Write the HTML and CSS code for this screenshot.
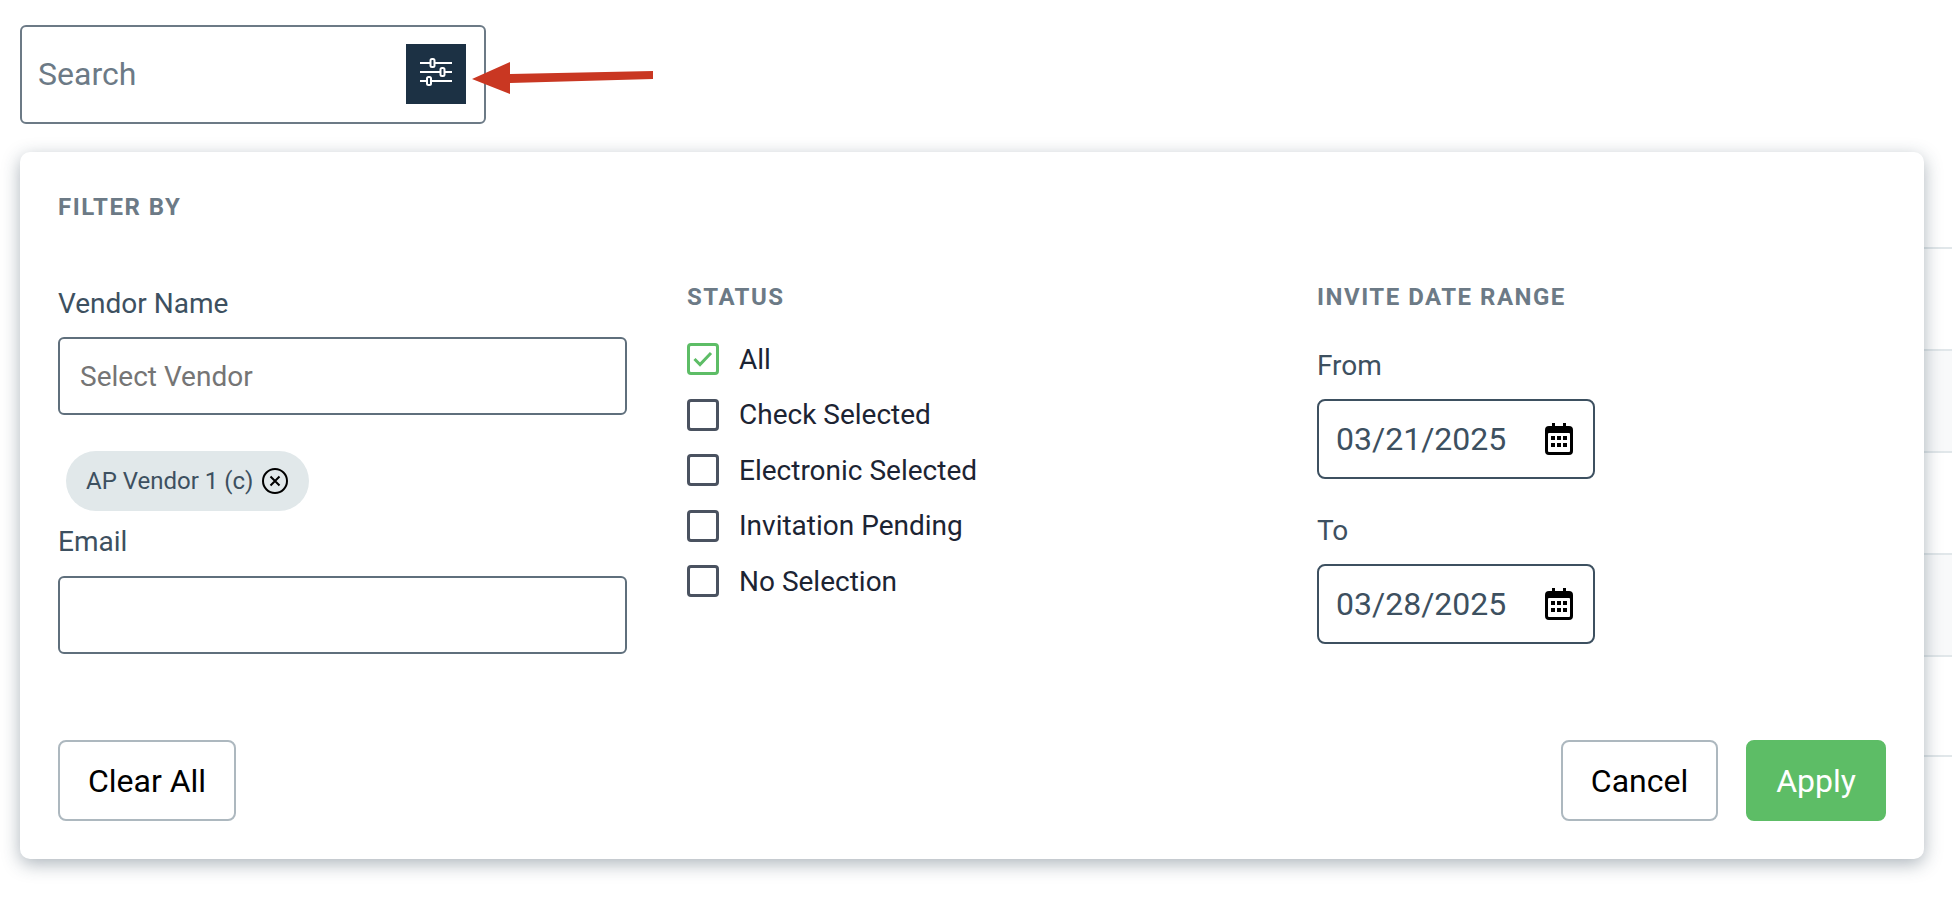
FILE: index.html
```html
<!DOCTYPE html>
<html lang="en">
<head>
<meta charset="utf-8">
<title>Vendor filter</title>
<link rel="stylesheet" href="styles.css">
</head>
<body>
<div class="page">
  <div class="search">
    <input class="search-input" type="text" placeholder="Search">
    <button class="filter-toggle" type="button" aria-label="Filter">
      <svg width="32" height="24" viewBox="0 0 32 24">
        <path d="M0 3h32M0 12h32M0 21h32" stroke="#fff" stroke-width="2" fill="none"/>
        <rect x="10.500" y="-1" width="4" height="8" rx="1.500" fill="#1c3144" stroke="#fff" stroke-width="2"/>
        <rect x="20.500" y="8" width="4" height="8" rx="1.500" fill="#1c3144" stroke="#fff" stroke-width="2"/>
        <rect x="7" y="17" width="4" height="8" rx="1.500" fill="#1c3144" stroke="#fff" stroke-width="2"/>
      </svg>
    </button>
  </div>

  <svg class="arrow" width="184" height="36" viewBox="0 0 184 36" aria-hidden="true">
    <path d="M0 19 38 2 38 14 181 11 181 19 38 23 38 34Z" fill="#c93722"/>
  </svg>

  <div class="table">
    <div class="row"></div>
    <div class="row row-alt"></div>
    <div class="row"></div>
    <div class="row row-alt"></div>
    <div class="row row-last"></div>
  </div>

  <section class="panel">
    <h2 class="title">FILTER BY</h2>
    <div class="columns">
      <div class="col">
        <label class="label label-vendor">Vendor Name</label>
        <input class="field field-vendor" type="text" placeholder="Select Vendor">
        <div class="chip">
          <span>AP Vendor 1 (c)</span>
          <svg width="26" height="26" viewBox="0 0 26 26">
            <circle cx="13" cy="13" r="12" fill="none" stroke="#000" stroke-width="2"/>
            <path d="M8.500 8.500l9 9M17.500 8.500l-9 9" stroke="#000" stroke-width="2" fill="none"/>
          </svg>
        </div>
        <label class="label label-email">Email</label>
        <input class="field field-email" type="text">
      </div>

      <div class="col">
        <h3 class="heading">STATUS</h3>
        <ul class="checks">
          <li class="check">
            <span class="box box-on">
              <svg width="20" height="16" viewBox="0 0 20 16"><path d="M1.500 8l5.500 5.500L18 2" fill="none" stroke="#5dbd66" stroke-width="3"/></svg>
            </span>All
          </li>
          <li class="check"><span class="box"></span>Check Selected</li>
          <li class="check"><span class="box"></span>Electronic Selected</li>
          <li class="check"><span class="box"></span>Invitation Pending</li>
          <li class="check"><span class="box"></span>No Selection</li>
        </ul>
      </div>

      <div class="col">
        <h3 class="heading">INVITE DATE RANGE</h3>
        <label class="label label-from">From</label>
        <div class="date">
          <span>03/21/2025</span>
          <svg width="28" height="32" viewBox="0 0 28 32">
            <path d="M7 0h3v3h8V0h3v3h3a4 4 0 0 1 4 4v21a4 4 0 0 1-4 4H4a4 4 0 0 1-4-4V7a4 4 0 0 1 4-4h3z" fill="#000"/>
            <rect x="3" y="10" width="22" height="19" rx="1" fill="#fff"/>
            <path d="M6 13h4v4H6zM12 13h4v4h-4zM18 13h4v4h-4zM6 20h4v4H6zM12 20h4v4h-4zM18 20h4v4h-4z" fill="#000"/>
          </svg>
        </div>
        <label class="label label-to">To</label>
        <div class="date">
          <span>03/28/2025</span>
          <svg width="28" height="32" viewBox="0 0 28 32">
            <path d="M7 0h3v3h8V0h3v3h3a4 4 0 0 1 4 4v21a4 4 0 0 1-4 4H4a4 4 0 0 1-4-4V7a4 4 0 0 1 4-4h3z" fill="#000"/>
            <rect x="3" y="10" width="22" height="19" rx="1" fill="#fff"/>
            <path d="M6 13h4v4H6zM12 13h4v4h-4zM18 13h4v4h-4zM6 20h4v4H6zM12 20h4v4h-4zM18 20h4v4h-4z" fill="#000"/>
          </svg>
        </div>
      </div>
    </div>

    <div class="footer">
      <button class="btn btn-clear" type="button">Clear All</button>
      <div class="footer-right">
        <button class="btn btn-cancel" type="button">Cancel</button>
        <button class="btn btn-apply" type="button">Apply</button>
      </div>
    </div>
  </section>
</div>
</body>
</html>
```

FILE: styles.css
```css
* { box-sizing: border-box; }
html, body { margin: 0; padding: 0; background: #fff; }
body { font-family: Roboto, "Liberation Sans", sans-serif; overflow: hidden; }

.page {
  position: relative;
  width: 1952px;
  height: 902px;
  padding: 25px 0 0 20px;
}

/* search */
.search {
  width: 466px;
  height: 99px;
  border: 2px solid #6c7a86;
  border-radius: 6px;
  display: flex;
  align-items: center;
  padding: 0 18px 2px 16px;
}
.search-input {
  flex: 1;
  min-width: 0;
  border: 0;
  outline: 0;
  padding: 0;
  background: none;
  font: 32px Roboto, sans-serif;
  color: #6c7a86;
}
.search-input::placeholder { color: #6c7a86; opacity: 1; }
.filter-toggle {
  width: 60px;
  height: 60px;
  padding: 0;
  border: 0;
  background: #1c3144;
  display: flex;
  align-items: center;
  justify-content: center;
}
.filter-toggle svg { overflow: visible; margin-bottom: 4px; }

.arrow { position: absolute; left: 472px; top: 60px; }

/* background table */
.table { margin-top: 123px; }
.row {
  height: 102px;
  border-top: 2px solid #e1e7ea;
}
.row-alt { background: #f8f9fa; }
.row-last { border-bottom: 2px solid #e1e7ea; }

/* panel */
.panel {
  position: absolute;
  left: 20px;
  top: 152px;
  width: 1904px;
  height: 707px;
  background: #fff;
  border-radius: 10px;
  box-shadow: 0 5px 18px rgba(40, 60, 80, .38);
  padding: 41px 38px 38px;
  display: flex;
  flex-direction: column;
}
.title {
  margin: 0;
  font-size: 24px;
  line-height: 28px;
  font-weight: 700;
  letter-spacing: 1.500px;
  color: #6c7a86;
}
.columns {
  display: grid;
  grid-template-columns: 629px 630px 1fr;
  margin-top: 60px;
}
.heading {
  margin: 0;
  font-size: 24px;
  line-height: 32px;
  font-weight: 700;
  letter-spacing: 1.500px;
  color: #6c7a86;
}
.label {
  display: block;
  font-size: 28px;
  line-height: 32px;
  color: #3d5060;
}
.label-vendor { margin-top: 7px; }
.label-email { margin-top: 15px; }
.label-from { margin-top: 37px; }
.label-to { margin-top: 36px; }

.field {
  display: block;
  width: 569px;
  height: 78px;
  border: 2px solid #5f6f7c;
  border-radius: 6px;
  padding: 0 20px;
  font: 28px Roboto, sans-serif;
  color: #3d5060;
  outline: 0;
  background: #fff;
}
.field::placeholder { color: #757575; opacity: 1; }
.field-vendor { margin-top: 17px; }
.field-email { margin-top: 18px; }

.chip {
  display: inline-flex;
  align-items: center;
  gap: 9px;
  height: 60px;
  margin: 36px 0 0 8px;
  padding: 0 21px 0 20px;
  border-radius: 30px;
  background: #e1e8ea;
  font-size: 24px;
  color: #3d5060;
  vertical-align: top;
}

.checks { list-style: none; margin: 30px 0 0; padding: 0; display: flex; flex-direction: column; gap: 23.500px; }
.check {
  display: flex;
  align-items: center;
  gap: 20px;
  height: 32px;
  font-size: 28px;
  color: #1c2433;
}
.box {
  width: 32px;
  height: 32px;
  flex: none;
  border: 3px solid #4a5260;
  border-radius: 4px;
  display: flex;
  align-items: center;
  justify-content: center;
}
.box-on { border-color: #5dbd66; }

.date {
  width: 278px;
  height: 80px;
  margin-top: 17px;
  border: 2px solid #3d5060;
  border-radius: 8px;
  padding: 0 20px 0 17px;
  display: flex;
  align-items: center;
  justify-content: space-between;
  font-size: 32px;
  color: #3d5060;
}

.footer {
  margin-top: auto;
  display: flex;
  justify-content: space-between;
}
.footer-right { display: flex; gap: 28px; }
.btn {
  height: 81px;
  border-radius: 8px;
  border: 2px solid #adb8bf;
  background: #fff;
  color: #000;
  font: 32px Roboto, sans-serif;
  padding: 0;
}
.btn-clear { width: 178px; }
.btn-cancel { width: 157px; }
.btn-apply { width: 140px; background: #5dbd66; border-color: #5dbd66; color: #fff; }
```
